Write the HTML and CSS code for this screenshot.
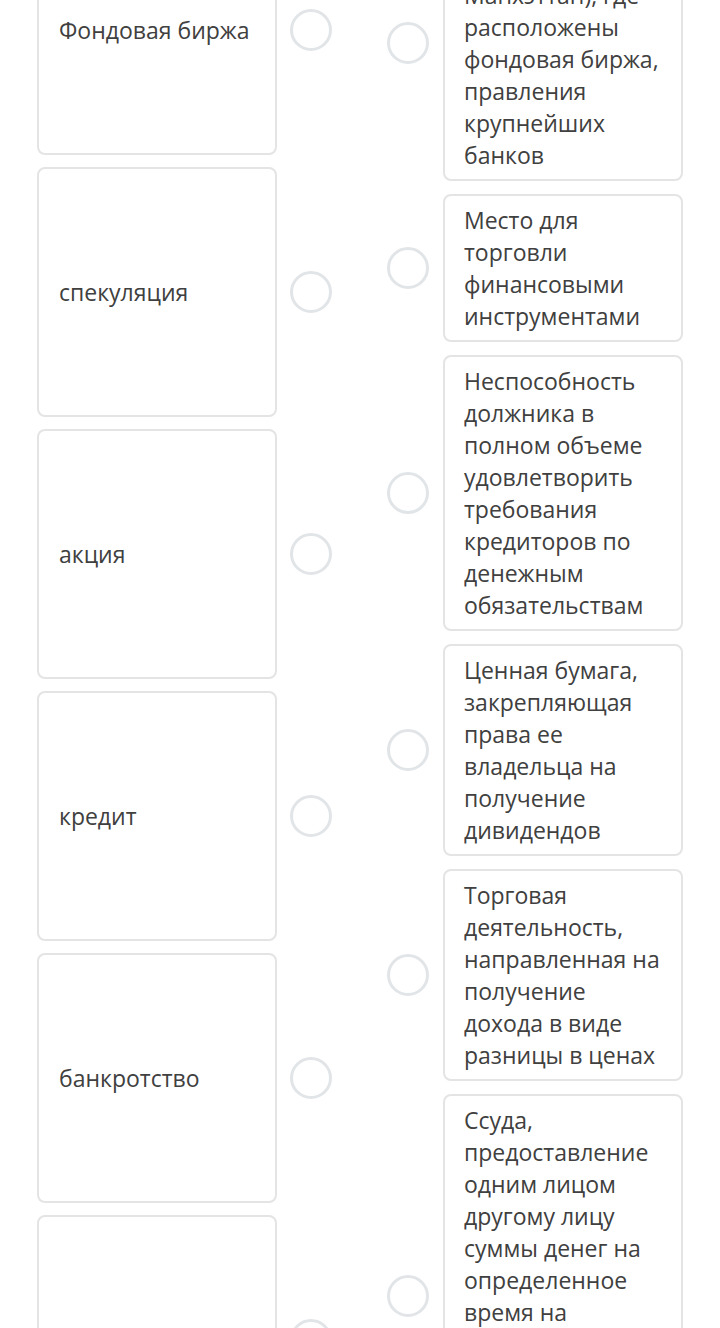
FILE: index.html
```html
<!DOCTYPE html>
<html lang="ru">
<head>
<meta charset="utf-8">
<link rel="stylesheet" href="styles.css">
</head>
<body>
<div class="board">
  <div class="col col-left">
    <div class="row-l"><div class="card card-l">Фондовая биржа</div><span class="dot"></span></div>
    <div class="row-l"><div class="card card-l">спекуляция</div><span class="dot"></span></div>
    <div class="row-l"><div class="card card-l">акция</div><span class="dot"></span></div>
    <div class="row-l"><div class="card card-l">кредит</div><span class="dot"></span></div>
    <div class="row-l"><div class="card card-l">банкротство</div><span class="dot"></span></div>
    <div class="row-l"><div class="card card-l">Уолл-стрит</div><span class="dot"></span></div>
  </div>
  <div class="col col-right">
    <div class="row-r"><span class="dot"></span><div class="card card-r">Улица в Нью-Йорке (район Манхэттан), где расположены фондовая биржа, правления крупнейших банков</div></div>
    <div class="row-r"><span class="dot"></span><div class="card card-r">Место для торговли финансовыми инструментами</div></div>
    <div class="row-r"><span class="dot"></span><div class="card card-r">Неспособность должника в полном объеме удовлетворить требования кредиторов по денежным обязательствам</div></div>
    <div class="row-r"><span class="dot"></span><div class="card card-r">Ценная бумага, закрепляющая права ее владельца на получение дивидендов</div></div>
    <div class="row-r"><span class="dot"></span><div class="card card-r">Торговая деятельность, направленная на получение дохода в виде разницы в ценах</div></div>
    <div class="row-r"><span class="dot"></span><div class="card card-r">Ссуда, предоставление одним лицом другому лицу суммы денег на определенное время на условиях возвратности и, как правило, с уплатой процента</div></div>
  </div>
</div>
</body>
</html>
```
FILE: styles.css
```css
html, body {
  margin: 0;
  padding: 0;
  background: #ffffff;
}
body {
  font-family: "Open Sans", "Noto Sans", sans-serif;
  color: #404040;
  font-size: 23px;
  line-height: 32px;
  overflow: hidden;
  height: 1328px;
}
.board {
  display: flex;
  justify-content: space-between;
  padding: 0 37px;
  margin-top: -95px;
}
.col {
  display: flex;
  flex-direction: column;
}
.col-left {
  gap: 12px;
}
.col-right {
  gap: 13px;
}
.row-l {
  display: flex;
  align-items: center;
  gap: 13px;
}
.row-r {
  display: flex;
  align-items: center;
  gap: 14px;
}
.card {
  box-sizing: border-box;
  width: 240px;
  border: 2px solid #e4e4e4;
  border-radius: 8px;
  background: #fff;
}
.card-l {
  height: 250px;
  display: flex;
  align-items: center;
  padding: 0 20px;
}
.card-r {
  padding: 8px 18px 8px 19px;
}
.dot {
  box-sizing: border-box;
  width: 42px;
  height: 42px;
  border: 3px solid #e2e5e8;
  border-radius: 50%;
  flex: none;
}
```
